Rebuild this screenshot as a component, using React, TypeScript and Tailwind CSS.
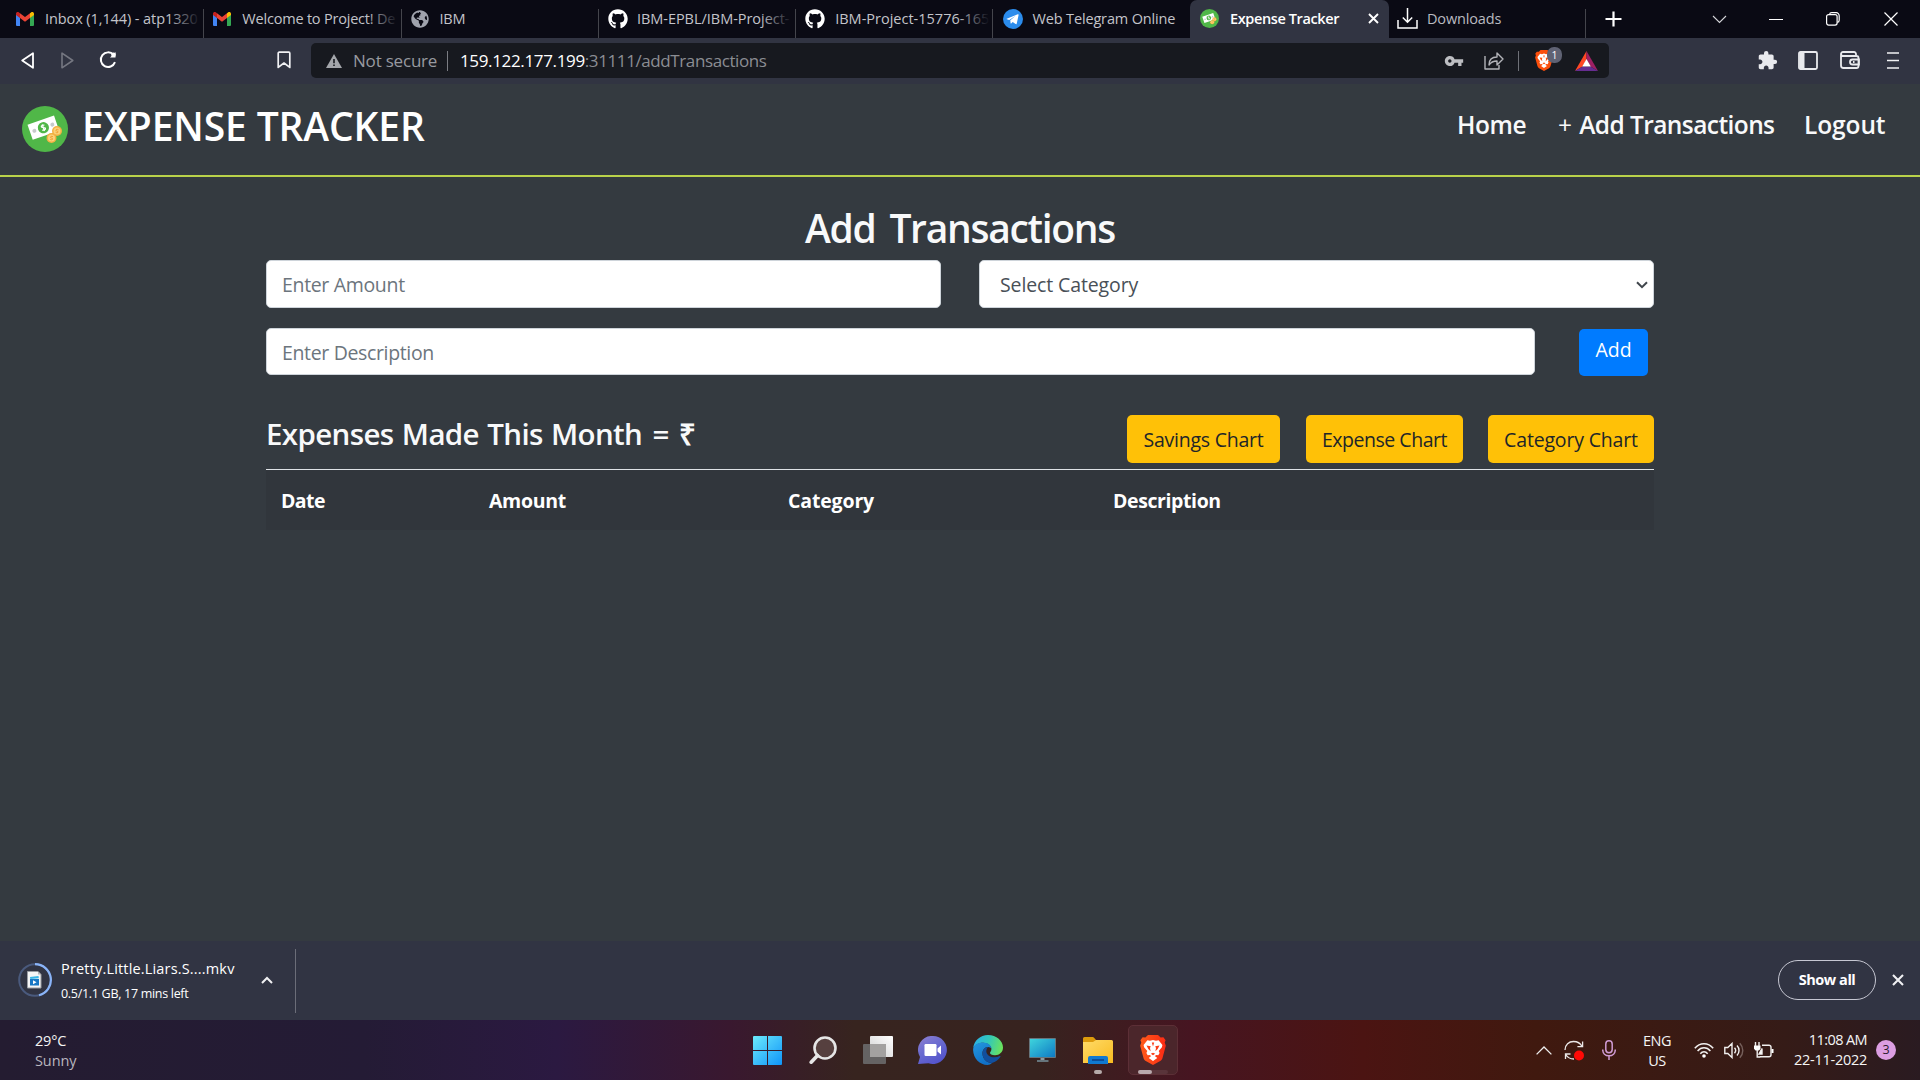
import React from "react";
import type { ReactNode } from "react";
import { FaGithub, FaGlobeAmericas } from "react-icons/fa";
import { MdExtension, MdVpnKey } from "react-icons/md";

function Gmail() {
  return (
    <svg width="18" height="14" viewBox="0 0 18 14">
      <path d="M0 2v11a1 1 0 0 0 1 1h3V5.5z" fill="#4285f4" />
      <path d="M18 2v11a1 1 0 0 1-1 1h-3V5.5z" fill="#34a853" />
      <path d="M14 1.2V6l4-3V1.8C18 .2 16.200-.5 15 .4z" fill="#fbbc04" />
      <path d="M4 6V1.200L9 5l5-3.800V6l-5 3.800z" fill="#ea4335" />
      <path d="M0 1.800V3l4 3V1.200L3 .4C1.700-.5 0 .2 0 1.800z" fill="#c5221f" />
    </svg>
  );
}

function MoneyLogo({ size }: { size: number }) {
  return (
    <svg width={size} height={size} viewBox="0 0 46 46">
      <circle cx="23" cy="23" r="23" fill="#50b748" />
      <g transform="rotate(-19 22 22)">
        <rect x="7.500" y="13.500" width="28" height="16" fill="#fff" />
        <circle cx="21.500" cy="21.500" r="5.600" fill="#50b748" />
        <circle cx="12" cy="21.500" r="2" fill="#c7cacb" />
        <circle cx="31" cy="21.500" r="2" fill="#c7cacb" />
        <path d="M23.300 19.500c-.6-.7-3.500-.9-3.500.6s3.500 1 3.500 2.600-2.900 1.500-3.600.6M21.500 18v7" stroke="#fff" strokeWidth="1.200" fill="none" />
      </g>
      <circle cx="35" cy="25" r="5" fill="#f5b143" />
      <circle cx="35" cy="25" r="3.500" fill="#fcd27a" />
      <circle cx="29.500" cy="32" r="5" fill="#f5b143" />
      <circle cx="29.500" cy="32" r="3.500" fill="#fcd27a" />
      <path d="M36.500 23.800c-.8-.8-2.800-.5-2.600.5s2.400.7 2.300 1.700-2 1-2.600.2M31 30.800c-.8-.8-2.800-.5-2.600.5s2.400.7 2.300 1.700-2 1-2.600.2" stroke="#ef9a2b" strokeWidth=".9" fill="none" />
    </svg>
  );
}

function Telegram() {
  return (
    <svg width="20" height="20" viewBox="0 0 20 20">
      <circle cx="10" cy="10" r="10" fill="#2b8cec" />
      <path d="M3.800 9.800 14.800 5.300c.6-.2.900.1.800.8l-1.900 8.600c-.1.600-.6.700-1.100.4L9.700 13l-1.500 1.400c-.3.300-.6.200-.6-.2l-.3-2.900 5.400-4.600-6.500 4.200-2.300-.7c-.4-.1-.4-.3-.1-.4z" fill="#fff" />
    </svg>
  );
}

function DownloadTray() {
  return (
    <svg width="21" height="21" viewBox="0 0 21 21" fill="none" stroke="#fff" strokeWidth="1.500">
      <path d="M10.500 0v14M5.800 9.500l4.700 4.700 4.700-4.700M1 12v8h19v-8" />
    </svg>
  );
}

function BraveLion({ width, height, glow }: { width: number; height: number; glow?: boolean }) {
  return (
    <svg width={width} height={height} viewBox="0 0 26 30">
      <defs>
        <linearGradient id="lion" x1="0" x2="1">
          <stop offset="0" stopColor="#ff5a1a" />
          <stop offset="1" stopColor="#fb2a14" />
        </linearGradient>
      </defs>
      <path
        d="M8 0h10l2.600 2.500 2.800-.2 2.200 3-.9 2.200 1.100 3.200-3.300 12.300c-.4 1.400-1.200 2.300-2.300 3.100L13 30l-7.200-3.900c-1.100-.8-1.900-1.700-2.300-3.100L.2 10.700l1.100-3.200L.4 5.300l2.200-3 2.800.2z"
        fill={glow ? "url(#lion)" : "#fb4f0c"}
      />
      <path
        d="M7.400 5.300 10 5.800 13 5l3 .8 2.600-.5 3.800 4.800-.5 2.100-3.200 3.800.9 2-1.300 2.300-2-.3-1.500 1.100 2.500 1.800L13 26l-4.300-3.100 2.500-1.800L9.700 20l-2 .3L6.400 18l.9-2-3.200-3.800-.5-2.100z"
        fill="#fff"
      />
      <path
        d="m6.500 10.600 4.300.6-.8 1.700.6 3.300-2.300-2.200zm13 0-4.300.6.8 1.700-.6 3.300 2.300-2.200zM11.800 7.600h2.400L13 11.500zM10.800 18.800 13 17.800l2.200 1-2.200 1.500z"
        fill={glow ? "#fb3d17" : "#fb4f0c"}
      />
    </svg>
  );
}

function Tab({ icon, text, label, fade = true }: { icon: ReactNode; text: string; label: string; fade?: boolean }) {
  return (
    <div className="relative flex h-[38px] w-[197.3px] shrink-0 items-center pl-[9px]">
      <div className="flex w-[31px] shrink-0 items-center pb-px">{icon}</div>
      <span className={"w-[155px] overflow-hidden whitespace-nowrap pb-px text-[14.500px] text-[#c3c4ca] " + label}>{text}</span>
      {fade && <div className="absolute right-0 top-2 h-6 w-9 bg-linear-to-r from-[#0a0a14]/0 to-[#0a0a14] to-90%" />}
      <div className="absolute right-0 top-[9px] h-[29px] w-px bg-[#44454c]" />
    </div>
  );
}

function TabStrip() {
  return (
    <div className="flex h-[38px] bg-[#0a0a14] pl-[7px]">
      <Tab icon={<Gmail />} text="Inbox (1,144) - atp1320" label="ml-[-2px] tracking-[-0.09px]" />
      <Tab icon={<Gmail />} text="Welcome to Project! De" label="ml-[-2px] tracking-[-0.2px]" />
      <Tab icon={<FaGlobeAmericas className="size-[18px] text-[#a0a3ad]" />} text="IBM" label="ml-[-2px] tracking-[-0.3px]" fade={false} />
      <Tab icon={<FaGithub className="size-5 text-white" />} text="IBM-EPBL/IBM-Project-" label="ml-[-2px] tracking-[-0.03px]" />
      <Tab icon={<FaGithub className="size-5 text-white" />} text="IBM-Project-15776-165" label="ml-[-1px] tracking-[0px]" />
      <div className="flex h-[38px] w-[196.500px] shrink-0 items-center pl-[10px]">
        <div className="w-[29px] shrink-0 pb-px"><Telegram /></div>
        <span className="whitespace-nowrap pb-px text-[14.500px] tracking-[-0.15px] text-[#c3c4ca]">Web Telegram Online</span>
      </div>
      <div className="flex h-[38px] w-[199px] shrink-0 items-center rounded-t-[7px] bg-[#313442] pl-[10px]">
        <div className="w-[30px] shrink-0 pb-px"><MoneyLogo size={19} /></div>
        <span className="w-[138px] whitespace-nowrap pb-px text-[14.500px] font-semibold tracking-[-0.38px] text-white">Expense Tracker</span>
        <svg width="11" height="11" viewBox="0 0 11 11" className="mb-px shrink-0" stroke="#fff" strokeWidth="1.900"><path d="m1 1 9 9m0-9-9 9" /></svg>
      </div>
      <div className="flex h-[38px] w-[197px] shrink-0 items-center pl-[8px]">
        <div className="w-[30px] shrink-0 pb-px"><DownloadTray /></div>
        <span className="w-[158px] pb-px text-[14.500px] tracking-[-0.15px] text-[#b9bac0]">Downloads</span>
        <div className="mt-[9px] h-[29px] w-px shrink-0 bg-[#44454c]" />
      </div>
      <div className="flex flex-1 items-center pl-[19px]">
        <svg width="17" height="16" viewBox="0 0 17 16" className="mr-[90px] shrink-0" stroke="#fff" strokeWidth="2.200"><path d="M8.500 .5v15M.5 8h16" /></svg>
        <svg width="15" height="9" viewBox="0 0 15 9" className="mr-[42px] shrink-0" fill="none" stroke="#d5d6da" strokeWidth="1.100"><path d="m1 1 6.500 6.500L14 1" /></svg>
        <div className="mr-[43px] h-px w-[14px] shrink-0 bg-white" />
        <svg width="14" height="14" viewBox="0 0 14 14" className="mr-[44px] shrink-0" fill="none" stroke="#fff" strokeWidth="1.200"><rect x=".6" y="2.600" width="10.500" height="10.500" rx="2" /><path d="M3.500 2.500C3.700 1.300 4.500.700 5.700.700h4.500a3 3 0 0 1 3 3v4.500c0 1.200-.6 2-1.900 2.200" /></svg>
        <svg width="14" height="14" viewBox="0 0 14 14" className="shrink-0" stroke="#fff" strokeWidth="1.200"><path d="m.5.500 13 13m0-13-13 13" /></svg>
      </div>
    </div>
  );
}

function Toolbar() {
  return (
    <div className="flex h-[46px] items-center bg-[#313442] pb-[2px]">
      <svg width="13" height="17" viewBox="0 0 13 17" className="ml-[21px]" fill="none" stroke="#fff" strokeWidth="1.800" strokeLinejoin="round"><path d="M12 1.200v14.600L1.200 8.500z" /></svg>
      <svg width="13" height="17" viewBox="0 0 13 17" className="ml-[27px]" fill="none" stroke="#757781" strokeWidth="1.600" strokeLinejoin="round"><path d="M1 1.200v14.600l10.800-7.300z" /></svg>
      <svg width="18" height="18" viewBox="0 0 18 18" className="ml-[25px]" fill="none" stroke="#fff" strokeWidth="2"><path d="M14.500 3.700A7.300 7.300 0 1 0 16 11.200" /><path d="M11 6.500h5.500V1z" fill="#fff" stroke="none" /><circle cx="14.500" cy="3.800" r="2.300" fill="#fff" stroke="none" /></svg>
      <svg width="14" height="18" viewBox="0 0 14 18" className="ml-[160px]" fill="none" stroke="#f1f1f4" strokeWidth="1.700" strokeLinejoin="round"><path d="M1.200 2.200a1 1 0 0 1 1-1h9.600a1 1 0 0 1 1 1v14.200L7 12l-5.800 4.400z" /></svg>
      <div className="ml-[20px] mt-px flex h-[35px] w-[1298px] items-center rounded-[5px] bg-[#17191f]">
        <svg width="16" height="14" viewBox="0 0 16 14" className="ml-[15px]"><path d="M8 0 16 14H0z" fill="#a4a6ab" /><path d="M7.200 5h1.600v4.300H7.200zm0 5.500h1.600V12H7.200z" fill="#17191f" /></svg>
        <span className="ml-[11px] w-[94px] whitespace-nowrap text-[17px] tracking-[-0.2px] text-[#989aa0]">Not secure</span>
        <div className="mr-[12px] h-[20px] w-px bg-[#7b7d83]" />
        <span className="whitespace-nowrap text-[17px] tracking-[-0.35px] text-white">159.122.177.199</span>
        <span className="flex-1 whitespace-nowrap text-[17px] tracking-[-0.4px] text-[#8b8d93]">:31111/addTransactions</span>
        <MdVpnKey className="mr-[20px] size-[20px] text-[#bdbec2]" />
        <svg width="20" height="19" viewBox="0 0 20 19" className="mr-[14px]" fill="none" stroke="#b3b4b9" strokeWidth="1.400" strokeLinejoin="round"><path d="M1 5v13h14v-4M5 14c0-5 3-8 8-8V2l6 6-6 6v-4c-4 0-6 1-8 4z" /></svg>
        <div className="mr-[16px] h-[20px] w-px bg-[#6f7178]" />
        <div className="relative mr-[22px] h-[21px] w-[18px]">
          <BraveLion width={18} height={21} />
          <div className="absolute left-[12px] top-[-3px] flex h-[16px] w-[15px] items-center justify-center rounded-[7px] bg-[#5f6273] text-[10.500px] leading-none text-white">1</div>
        </div>
        <svg width="23" height="20" viewBox="0 0 23 20" className="mr-[11px]">
          <path d="M11.500 0 0 20l7.500-4.500 4-7z" fill="#ff4724" />
          <path d="M11.500 0 23 20l-7.500-4.500-4-7z" fill="#9e1f63" />
          <path d="m0 20 7.500-4.500h8L23 20z" fill="#662d91" />
          <path d="m11.500 8 4.300 7.500H7.200z" fill="#fff" />
        </svg>
      </div>
      <div className="flex flex-1 items-center pl-[148px]">
        <MdExtension className="mr-[20px] size-[21px] text-[#e9eaee]" />
        <svg width="20" height="19" viewBox="0 0 20 19" className="mr-[22px]" fill="none" stroke="#e9eaee" strokeWidth="1.800"><rect x="1" y="1" width="18" height="17" rx="1.500" /><path d="M4 1v17" strokeWidth="5" /></svg>
        <svg width="20" height="18" viewBox="0 0 20 18" className="mr-[27px]" fill="none" stroke="#e9eaee" strokeWidth="1.800"><path d="M16 4.500V3a2 2 0 0 0-2-2H3a2 2 0 0 0 0 4h13.500a2 2 0 0 1 2 2v8a2 2 0 0 1-2 2H3.500a2.500 2.500 0 0 1-2.500-2.500V3M19 8.500h-6.500a2.500 2.500 0 0 0 0 5H19zM13 11h1.500" /></svg>
        <svg width="12" height="17" viewBox="0 0 12 17" stroke="#f1f1f4" strokeWidth="1.700"><path d="M0 1h12M0 8.500h12M0 16h12" /></svg>
      </div>
    </div>
  );
}

function Header() {
  return (
    <header className="flex h-[93px] border-b-2 border-[#b9d24a] bg-[#343a40] pl-[22px] pr-[34px] pt-[22px]">
      <MoneyLogo size={46} />
      <h1 className="ml-[14px] mt-[-6px] flex-1 whitespace-nowrap text-[39px] font-semibold leading-[52px] tracking-[-0.13px] text-white">EXPENSE TRACKER</h1>
      <nav className="mt-[-1px] flex whitespace-nowrap text-[24.500px] font-semibold leading-[40px] text-[#f8f9fa]">
        <span className="mr-[32px] w-[69px] tracking-[-0.4px]">Home</span>
        <span className="mr-[30px] w-[216px] tracking-[-0.58px]"><span className="mr-[2px] font-normal">+</span> Add Transactions</span>
        <span className="w-[82px] tracking-[-0.1px]">Logout</span>
      </nav>
    </header>
  );
}

function Page() {
  return (
    <main className="h-[764px] bg-[#343a40] px-[266px] pt-[27px] text-[19.500px]">
      <h2 className="h-[56px] whitespace-nowrap text-center text-[39px] font-semibold leading-[48px] tracking-[-1.3px] text-[#f8f9fa] [word-spacing:5px]">Add Transactions</h2>
      <div className="flex gap-[38px]">
        <div className="flex h-[48px] w-[675px] items-center rounded-[5px] border border-[#ced4da] bg-white pl-[15px] pt-[2px] tracking-[-0.33px] text-[#6c757d]">Enter Amount</div>
        <div className="flex h-[48px] w-[675px] items-center justify-between rounded-[5px] border border-[#ced4da] bg-white pl-[20px] pr-[5px] pt-[2px] tracking-[-0.12px] text-[#495057]">
          Select Category
          <svg width="12" height="8" viewBox="0 0 12 8" fill="none" stroke="#40464c" strokeWidth="2"><path d="m1 1.200 5 5 5-5" /></svg>
        </div>
      </div>
      <div className="mt-[20px] flex">
        <div className="flex h-[47px] w-[1269px] items-center rounded-[5px] border border-[#ced4da] bg-white pl-[15px] pt-[2px] tracking-[-0.35px] text-[#6c757d]">Enter Description</div>
        <div className="ml-[44px] mt-px h-[47px] w-[69px] rounded-[5px] bg-[#007bff] text-center leading-[42px] text-white">Add</div>
      </div>
      <div className="mt-[39px] flex h-[54px] items-start gap-[25px]">
        <h3 className="mt-px flex-1 whitespace-nowrap text-[29.500px] font-semibold leading-[36px] tracking-[-0.62px] text-[#f8f9fa] [word-spacing:1.2px]">Expenses Made This Month <span className="mx-[2px]">=</span> ₹</h3>
        <div className="mr-[1px] h-[48px] w-[153px] rounded-[5px] bg-[#ffc107] text-center leading-[49px] tracking-[-0.25px] text-[#212529]">Savings Chart</div>
        <div className="h-[48px] w-[157px] rounded-[5px] bg-[#ffc107] text-center leading-[49px] tracking-[-0.48px] text-[#212529]">Expense Chart</div>
        <div className="h-[48px] w-[166px] rounded-[5px] bg-[#ffc107] text-center leading-[49px] tracking-[-0.17px] text-[#212529]">Category Chart</div>
      </div>
      <div className="flex h-[61px] whitespace-nowrap border-t border-[#dee2e6] bg-[#31363c] pl-[15px] font-bold leading-[61px] text-white">
        <span className="w-[208px] tracking-[-0.6px]">Date</span>
        <span className="w-[299px] tracking-[-0.33px]">Amount</span>
        <span className="w-[325px] tracking-[-0.15px]">Category</span>
        <span className="tracking-[-0.4px]">Description</span>
      </div>
    </main>
  );
}

function DownloadBar() {
  return (
    <div className="flex h-[79px] items-center bg-[#313443] pb-px pl-[18px] pr-[16px]">
      <svg width="34" height="34" viewBox="0 0 34 34">
        <circle cx="17" cy="17" r="15.800" fill="none" stroke="#4a5a7d" strokeWidth="2" />
        <path d="M17 1.200A15.800 15.800 0 0 1 21 32.300" fill="none" stroke="#8ab4f8" strokeWidth="2.200" />
        <path d="M9.500 8.500h10.500l3 3v13.500h-13.500z" fill="#f5f5f6" stroke="#9a9da3" />
        <path d="m20 8.500 3 3h-3z" fill="#b4b6ba" />
        <path d="M12 16h9v6.500h-9z" fill="#1877c5" />
        <path d="m12 14 8.500-1 .3 2.200-8.500.800z" fill="#38b6e8" />
        <path d="m15 17.300 3.500 2-3.500 2z" fill="#fff" />
      </svg>
      <div className="ml-[9px] w-[200px] whitespace-nowrap text-white">
        <div className="mt-[2px] text-[14.500px] leading-[24px] tracking-[0.17px]">Pretty.Little.Liars.S....mkv</div>
        <div className="pt-px text-[12.500px] leading-[24px] tracking-[-0.3px]">0.5/1.1 GB, 17 mins left</div>
      </div>
      <svg width="12" height="8" viewBox="0 0 12 8" fill="none" stroke="#f0f0f3" strokeWidth="2"><path d="m1 7 5-5 5 5" /></svg>
      <div className="ml-[22px] mt-px h-[64px] w-px bg-[#6b6d78]" />
      <div className="flex-1" />
      <div className="mr-[16px] flex h-[40px] w-[98px] items-center justify-center rounded-full border border-[#c6c7d2] pb-px text-[14.500px] font-bold tracking-[-0.45px] text-white">Show all</div>
      <svg width="12" height="12" viewBox="0 0 12 12" stroke="#f0f0f3" strokeWidth="2.100"><path d="m1 1 10 10m0-10L1 11" /></svg>
    </div>
  );
}

function Edge() {
  return (
    <svg width="30" height="30" viewBox="0 0 30 30">
      <defs>
        <linearGradient id="e1" x1="0" y1=".3" x2="1" y2=".5"><stop offset="0" stopColor="#2ab0e8" /><stop offset=".5" stopColor="#33c8b8" /><stop offset="1" stopColor="#6be35c" /></linearGradient>
        <linearGradient id="e2" x1="0" y1="0" x2=".5" y2="1"><stop offset="0" stopColor="#2497dd" /><stop offset="1" stopColor="#1070c8" /></linearGradient>
      </defs>
      <path d="M.2 13C1.200 5.500 7.200 0 15 0c8.500 0 15 6 15 12.500 0 4.700-3.600 7.700-8 7.700-3.300 0-5-1.200-5-2.300 0-.8 1.400-1.600 1.400-3.900 0-3.200-3.300-6.300-8.200-6.300C5.300 7.700 1.800 10 .2 13z" fill="url(#e1)" />
      <path d="M.1 15C0 10 5 7.600 10 7.600c4.800 0 8.300 2.800 8.400 6-.4-.9-1.700-1.700-3.400-1.700-3.500 0-5.500 3-5.500 6.600 0 5.500 4.500 9.500 9.500 9.500-1.300 1.300-3 2-4.500 2C6.800 30 .3 23.500.100 15z" fill="url(#e2)" />
      <path d="M15 12c-3.500.5-5.500 3-5.500 6.500 0 5.500 4.500 9.500 9.500 9.500 3.500-1 6.200-3 8.400-6.200.4-.6-.2-1-.7-.7-3.700 1.900-8.700 1.500-11.200-.7-2.700-2.300-2.900-5.600-.5-8.400z" fill="#114f9e" />
    </svg>
  );
}

function Taskbar() {
  return (
    <div className="flex h-[60px] items-center whitespace-nowrap bg-[linear-gradient(90deg,#241c31_0%,#241b35_19%,#2b1941_29%,#39182f_38%,#37241f_44.500%,#37231f_54%,#461521_62%,#4b1412_71%,#40190f_80%,#351b17_93%,#2a1b21_100%)] text-[14.500px] leading-[20px] text-[#f5f5f5]">
      <div className="w-[753px] shrink-0 pl-[35px] pt-px">
        <div className="tracking-[-0.2px]">29°C</div>
        <div className="tracking-[-0.1px] text-[#b9b6bf]">Sunny</div>
      </div>
      <svg width="29" height="29" viewBox="0 0 29 29" className="mt-px mr-[27px] shrink-0">
        <defs><linearGradient id="win" x1="0" y1="0" x2="1" y2="1" gradientUnits="objectBoundingBox"><stop offset="0" stopColor="#6ceafc" /><stop offset="1" stopColor="#0f94f8" /></linearGradient></defs>
        <path d="M1 0h13v14H0V1a1 1 0 0 1 1-1zm14 0h13a1 1 0 0 1 1 1v13H15zM0 15h14v14H1a1 1 0 0 1-1-1zm15 0h14v13a1 1 0 0 1-1 1H15z" fill="url(#win)" />
      </svg>
      <svg width="28" height="28" viewBox="0 0 28 28" className="mr-[26px] shrink-0" fill="none" stroke="#e6e6e6"><circle cx="16" cy="12" r="10.500" strokeWidth="2.600" fill="#56403f" /><path d="m8.500 19.500-6.300 6.700" strokeWidth="3.600" strokeLinecap="round" /></svg>
      <svg width="30" height="28" viewBox="0 0 30 28" className="mr-[25px] shrink-0">
        <defs>
          <linearGradient id="tv" x1="0" y1="1" x2="1" y2="0"><stop offset="0" stopColor="#d0d0d0" /><stop offset="1" stopColor="#fff" /></linearGradient>
        </defs>
        <rect y="8" width="23" height="20" rx="1" fill="#656363" />
        <rect x="7" width="23" height="21" rx="1" fill="url(#tv)" />
        <rect x="7" y="8" width="16" height="13" fill="#a3a1a0" />
      </svg>
      <svg width="29" height="28" viewBox="0 0 29 28" className="mr-[26px] shrink-0">
        <defs><linearGradient id="chat" x1="0" y1="0" x2=".6" y2="1"><stop offset="0" stopColor="#8f80d0" /><stop offset=".5" stopColor="#6a6bd0" /><stop offset="1" stopColor="#5454cc" /></linearGradient></defs>
        <path d="M15 0a14 14 0 1 1-4.500 27.300L0 28l2-7A14 14 0 0 1 15 0z" fill="url(#chat)" />
        <rect x="6.500" y="8" width="12" height="12" rx="1.200" fill="#fff" />
        <path d="m19.500 12.500 3.500-3v9l-3.500-3z" fill="#fff" />
      </svg>
      <div className="mr-[26px] shrink-0"><Edge /></div>
      <svg width="27" height="24" viewBox="0 0 27 24" className="mr-[27px] shrink-0">
        <defs><linearGradient id="pc" x1="0" y1="0" x2="1" y2="1"><stop offset="0" stopColor="#3ed4dc" /><stop offset="1" stopColor="#0f7ac4" /></linearGradient></defs>
        <rect width="27" height="20" rx="1" fill="#66757c" />
        <rect x="1" y="1" width="25" height="18" fill="url(#pc)" />
        <path d="M11.500 20h4v2.500h-4z" fill="#8d999f" /><path d="M8 22h11.500v2H8z" fill="#66757c" />
      </svg>
      <div className="relative mr-[15px] shrink-0">
        <svg width="30" height="27" viewBox="0 0 30 27">
          <defs><linearGradient id="fo" x1="0" y1="0" x2="1" y2="1"><stop offset="0" stopColor="#ffdb68" /><stop offset="1" stopColor="#f8bb20" /></linearGradient></defs>
          <path d="M0 1.500A1.500 1.500 0 0 1 1.500 0H9c1 0 2 .5 2.500 1.200L13 3v4H0z" fill="#dd9b0c" />
          <path d="M0 5h10l3-2h15.500A1.500 1.500 0 0 1 30 4.500v21.500H0z" fill="url(#fo)" />
          <path d="M5 27v-6a2 2 0 0 1 2-2h16a2 2 0 0 1 2 2v6z" fill="#1079d0" /><path d="M9 23h12" stroke="#0a3f86" strokeWidth="1.500" />
        </svg>
        <div className="absolute left-[11px] top-[33.500px] h-[4px] w-[8px] rounded-full bg-[#b5aaa9]" />
      </div>
      <div className="relative flex size-[50px] shrink-0 items-center justify-center rounded-[5px] border border-[#5c2f36] bg-[#4b262b]">
        <BraveLion width={26} height={30} glow />
        <div className="absolute bottom-0 left-[9px] h-[4px] w-[30px] rounded-full bg-[#59343a]"><div className="h-full w-[14px] rounded-full bg-[#b9a8ac]" /></div>
      </div>
      <div className="flex flex-1 items-center pl-[358px]">
        <svg width="16" height="9" viewBox="0 0 16 9" className="mr-[12px] shrink-0" fill="none" stroke="#eee" strokeWidth="1.300"><path d="m.6 8.400 7.400-7.400 7.400 7.400" /></svg>
        <svg width="20" height="21" viewBox="0 0 20 21" className="mr-[18px] shrink-0" fill="none" stroke="#ece8e7" strokeWidth="1.300"><path d="M1 10C1 4.500 5 1.500 9.500 1.500c4 0 7 2 8.500 5M18.600 1.500v5.200h-5.200M1.500 19v-5h5M1.700 14.500c1.800 3 4.600 4.500 8.300 4.500" /><circle cx="15" cy="15.500" r="5" fill="#ff0a06" stroke="none" /></svg>
        <svg width="14" height="20" viewBox="0 0 14 20" className="mr-[27px] shrink-0" fill="none" stroke="#cf9bd3" strokeWidth="1.500"><rect x="3.800" y=".8" width="6.400" height="12" rx="3.200" /><path d="M.7 9.500c0 4 2.700 6.300 6.300 6.300s6.300-2.300 6.300-6.300M7 16v4" /></svg>
        <div className="mr-[23px] w-[28px] shrink-0 pt-px text-center tracking-[-0.45px]"><div>ENG</div><div>US</div></div>
        <svg width="20" height="16" viewBox="0 0 20 16" className="mr-[10px] shrink-0" fill="none" stroke="#f1efee" strokeWidth="1.500"><path d="M.8 6.200c5-6 13.400-6 18.400 0M3.600 9c3.600-4.300 9.200-4.300 12.800 0M6.300 11.700c2.100-2.500 5.300-2.500 7.400 0" /><circle cx="10" cy="14" r="1.800" fill="#fff" stroke="none" /></svg>
        <svg width="20" height="17" viewBox="0 0 20 17" className="mr-[10px] shrink-0" fill="none" stroke="#f1efee" strokeWidth="1.400"><path d="M.8 5.500h3L8 1.500v14l-4.200-4h-3zM10.500 5.800c1.300 1.500 1.300 3.900 0 5.400M13 3.500c2.700 2.800 2.700 7.200 0 10" /><path d="M15.800 1.200c4 4.200 4 10.400 0 14.600" stroke="#76605c" /></svg>
        <svg width="20" height="17" viewBox="0 0 20 17" className="mr-[20px] shrink-0" fill="none" stroke="#f1efee" strokeWidth="1.400"><path d="M8 3.200h7a2 2 0 0 1 2 2v7.600a2 2 0 0 1-2 2H5.800" /><path d="M17.500 7h2v4h-2zM0 3.500h6.500v3.200L5 8.500H1.500L0 6.700z" fill="#fff" stroke="none" /><path d="M1.500 0v4M5 0v4M3.200 8v7h3" /><path d="M8 6.500 5 12h3z" fill="#fff" /></svg>
        <div className="mr-[9px] w-[73px] shrink-0 pb-[1px] text-right"><div className="tracking-[-0.6px]">11:08 AM</div><div className="tracking-[-0.25px]">22-11-2022</div></div>
        <div className="flex size-[20px] shrink-0 items-center justify-center rounded-full bg-[#dc9ee2] text-[12.500px] leading-none text-[#2a1a2c]">3</div>
      </div>
    </div>
  );
}

export default function App() {
  return (
    <div className="flex h-[1080px] w-[1920px] flex-col overflow-hidden font-['Open_Sans',sans-serif]">
      <TabStrip />
      <Toolbar />
      <Header />
      <Page />
      <DownloadBar />
      <Taskbar />
    </div>
  );
}
